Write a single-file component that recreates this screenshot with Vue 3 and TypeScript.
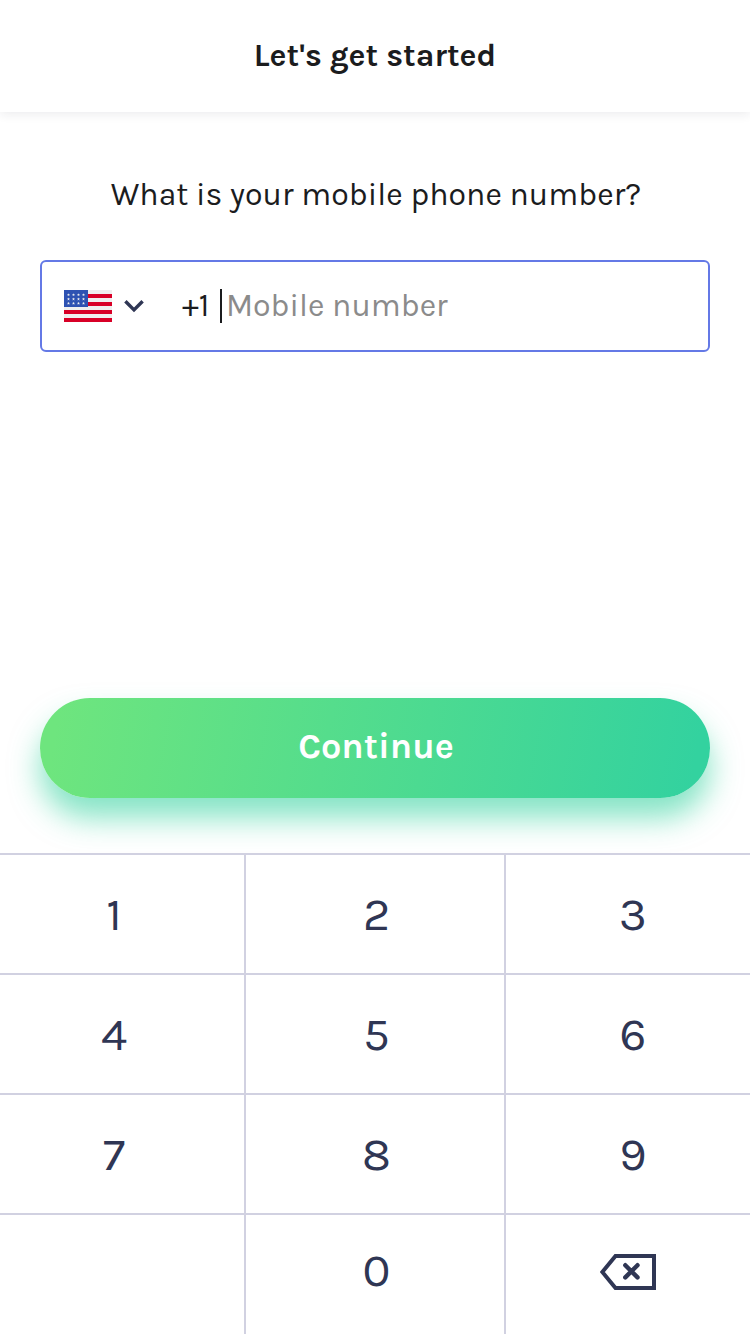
<script setup lang="ts">
import { ref } from 'vue'

const keys: string[] = ['1', '2', '3', '4', '5', '6', '7', '8', '9', '', '0', 'delete']
const phone = ref<string>('')
const stars: { x: number; y: number }[] = [4.5, 9.5, 14.5, 19.5].flatMap((x) =>
  [4.7, 9, 13.3].map((y) => ({ x, y })),
)

function press(key: string): void {
  if (key === 'delete') phone.value = phone.value.slice(0, -1)
  else phone.value += key
}
</script>

<template>
  <main class="screen">
    <header class="header"><h1 class="title">Let's get started</h1></header>
    <section class="content">
      <p class="prompt">What is your mobile phone number?</p>
      <div class="field">
        <svg class="flag" viewBox="0 0 48 32" width="48" height="32" shape-rendering="crispEdges">
          <rect width="48" height="32" fill="#efefef" />
          <path d="M0 4h48v4H0zM0 12h48v4H0zM0 20h48v4H0zM0 28h48v4H0z" fill="#d80027" />
          <rect width="24" height="17" fill="#2e52b2" />
          <path
            v-for="(s, i) in stars"
            :key="i"
            :transform="`translate(${s.x} ${s.y})`"
            d="M0-1.5.4-.5 1.5-.4.65.3.9 1.4 0 .8-.9 1.4-.65.3-1.5-.4-.4-.5z"
            fill="#f0f0f0"
            shape-rendering="auto"
          />
        </svg>
        <svg class="chevron" viewBox="0 0 20 14" width="20" height="14">
          <path d="M1.4 2.2 10 10.9 18.6 2.2" fill="none" stroke="#2f3654" stroke-width="3.4" />
        </svg>
        <span class="code">+1</span>
        <span class="caret"></span>
        <span v-if="phone" class="value">{{ phone }}</span>
        <span v-else class="placeholder">Mobile number</span>
      </div>
      <button class="continue" type="button"><span>Continue</span></button>
    </section>
    <section class="keypad">
      <div v-for="(key, i) in keys" :key="i" class="key" :class="`key-${key || 'blank'}`" @click="press(key)">
        <svg v-if="key === 'delete'" viewBox="0 0 56 36" width="56" height="36">
          <path d="M15.5 2H54v32H15.5L2.3 18z" fill="none" stroke="#2f3654" stroke-width="4" />
          <path d="m25.3 11.2 12.2 12.2M37.5 11.2 25.3 23.4" fill="none" stroke="#2f3654" stroke-width="4.4" stroke-linecap="round" />
        </svg>
        <span v-else>{{ key }}</span>
      </div>
    </section>
  </main>
</template>

<style>
body { margin: 0; background: #fff; }
</style>

<style scoped>
.screen {
  display: flex;
  flex-direction: column;
  width: 750px;
  height: 1334px;
  overflow: hidden;
  background: #fff;
  color: #1b1c1e;
  font-family: Karla, Roboto, "Liberation Sans", sans-serif;
}
.header {
  height: 112px;
  flex: none;
  display: flex;
  justify-content: center;
  box-shadow: 0 2px 10px rgba(30, 30, 60, 0.09);
}
.title {
  margin: 0;
  font-size: 32px;
  line-height: 112px;
  font-weight: 700;
  white-space: nowrap;
}
.content {
  height: 741px;
  flex: none;
  box-sizing: border-box;
  padding: 63px 40px 0;
  display: flex;
  flex-direction: column;
}
.prompt {
  margin: 0 0 45px;
  padding-left: 2px;
  font-size: 32px;
  line-height: 40px;
  letter-spacing: 0.04px;
  text-align: center;
  white-space: nowrap;
}
.field {
  height: 92px;
  box-sizing: border-box;
  border: 2px solid #6479e6;
  border-radius: 6px;
  padding-left: 22px;
  display: flex;
  align-items: center;
  font-size: 32px;
}
.flag { flex: none; }
.chevron { margin-left: 12px; flex: none; }
.code { width: 38px; margin-left: 38px; }
.caret { width: 2px; height: 34px; background: #1b1c1e; }
.placeholder,
.value { margin-left: 4px; padding-bottom: 2px; }
.code { padding-bottom: 1px; }
.placeholder { color: #8b8b8b; }
.continue {
  height: 100px;
  margin-top: 346px;
  padding: 0 0 4px 2px;
  border: 0;
  border-radius: 50px;
  background: linear-gradient(100deg, #6ee57e 3%, #33d29f 97%);
  box-shadow: 0 20px 30px rgba(51, 210, 159, 0.6);
  color: #fff;
  font: inherit;
  font-size: 36px;
  font-weight: 700;
}
.keypad {
  position: relative;
  height: 481px;
  display: grid;
  grid-template-columns: 246px 260px 244px;
  grid-template-rows: repeat(3, 120px) 121px;
  background: #fff;
}
.key {
  box-sizing: border-box;
  border-top: 2px solid #d1d1e1;
  border-right: 2px solid #d1d1e1;
  display: flex;
  align-items: center;
  justify-content: center;
  color: #2f3654;
  font-size: 47px;
}
.key:nth-child(3n) { border-right: 0; }
.key:nth-child(3n + 1) { padding-right: 16px; }
.key:nth-child(3n + 2) { padding-left: 3px; }
.key:nth-child(3n) { padding-left: 10px; }
.key-0 { padding-bottom: 8px; }
.key-delete { padding: 0 0 6px 0 !important; }
</style>
